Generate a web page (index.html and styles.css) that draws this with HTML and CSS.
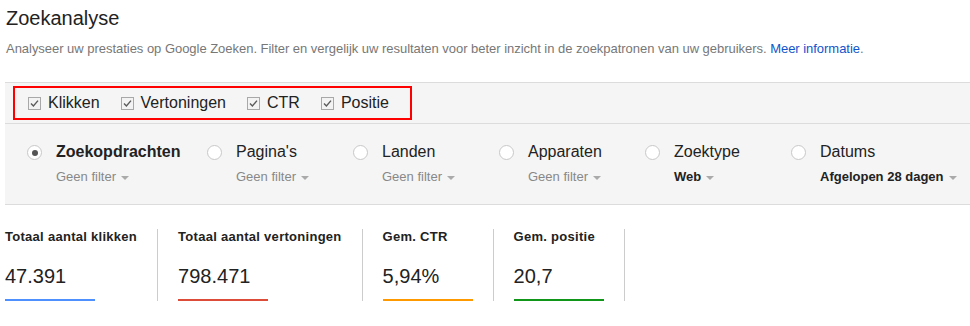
FILE: index.html
```html
<!DOCTYPE html>
<html lang="nl">
<head>
<meta charset="utf-8">
<title>Zoekanalyse</title>
<link rel="stylesheet" href="styles.css">
</head>
<body>
<div class="page">
  <h1 class="title">Zoekanalyse</h1>
  <p class="desc">Analyseer uw prestaties op Google Zoeken. Filter en vergelijk uw resultaten voor beter inzicht in de zoekpatronen van uw gebruikers. <a href="#" class="link">Meer informatie</a>.</p>

  <div class="panel">
    <div class="metrics-row">
      <div class="metrics-box">
        <label class="check"><svg class="cb" width="13" height="13" viewBox="0 0 13 13"><rect x="0.5" y="0.5" width="12" height="12" fill="#f3f3f3" stroke="#a8a8a8"/><path d="M3 6.6 L5.4 9 L10 3.6" fill="none" stroke="#5a5a5a" stroke-width="1.4"/></svg><span>Klikken</span></label>
        <label class="check"><svg class="cb" width="13" height="13" viewBox="0 0 13 13"><rect x="0.5" y="0.5" width="12" height="12" fill="#f3f3f3" stroke="#a8a8a8"/><path d="M3 6.6 L5.4 9 L10 3.6" fill="none" stroke="#5a5a5a" stroke-width="1.4"/></svg><span>Vertoningen</span></label>
        <label class="check"><svg class="cb" width="13" height="13" viewBox="0 0 13 13"><rect x="0.5" y="0.5" width="12" height="12" fill="#f3f3f3" stroke="#a8a8a8"/><path d="M3 6.6 L5.4 9 L10 3.6" fill="none" stroke="#5a5a5a" stroke-width="1.4"/></svg><span>CTR</span></label>
        <label class="check"><svg class="cb" width="13" height="13" viewBox="0 0 13 13"><rect x="0.5" y="0.5" width="12" height="12" fill="#f3f3f3" stroke="#a8a8a8"/><path d="M3 6.6 L5.4 9 L10 3.6" fill="none" stroke="#5a5a5a" stroke-width="1.4"/></svg><span>Positie</span></label>
      </div>
    </div>

    <div class="dims">
      <div class="dim dim-wide">
        <span class="radio radio-on"></span>
        <div class="dim-text">
          <div class="dim-name bold">Zoekopdrachten</div>
          <div class="dim-filter">Geen filter<span class="caret"></span></div>
        </div>
      </div>
      <div class="dim">
        <span class="radio"></span>
        <div class="dim-text">
          <div class="dim-name">Pagina's</div>
          <div class="dim-filter">Geen filter<span class="caret"></span></div>
        </div>
      </div>
      <div class="dim">
        <span class="radio"></span>
        <div class="dim-text">
          <div class="dim-name">Landen</div>
          <div class="dim-filter">Geen filter<span class="caret"></span></div>
        </div>
      </div>
      <div class="dim">
        <span class="radio"></span>
        <div class="dim-text">
          <div class="dim-name">Apparaten</div>
          <div class="dim-filter">Geen filter<span class="caret"></span></div>
        </div>
      </div>
      <div class="dim">
        <span class="radio"></span>
        <div class="dim-text">
          <div class="dim-name">Zoektype</div>
          <div class="dim-filter strong">Web<span class="caret"></span></div>
        </div>
      </div>
      <div class="dim">
        <span class="radio"></span>
        <div class="dim-text">
          <div class="dim-name">Datums</div>
          <div class="dim-filter strong">Afgelopen 28 dagen<span class="caret"></span></div>
        </div>
      </div>
    </div>
  </div>

  <div class="cards">
    <div class="card card-first">
      <div class="card-label">Totaal aantal klikken</div>
      <div class="card-value">47.391</div>
      <div class="bar bar-blue"></div>
    </div>
    <div class="card">
      <div class="card-label">Totaal aantal vertoningen</div>
      <div class="card-value">798.471</div>
      <div class="bar bar-red"></div>
    </div>
    <div class="card">
      <div class="card-label">Gem. CTR</div>
      <div class="card-value">5,94%</div>
      <div class="bar bar-orange"></div>
    </div>
    <div class="card">
      <div class="card-label">Gem. positie</div>
      <div class="card-value">20,7</div>
      <div class="bar bar-green"></div>
    </div>
  </div>
</div>
</body>
</html>
```

FILE: styles.css
```css
html, body {
  margin: 0;
  padding: 0;
  background: #fff;
}

body {
  font-family: "Liberation Sans", Arial, sans-serif;
  color: #222;
}

.page {
  padding-left: 5px;
}

.title {
  margin: 6px 0 0 1px;
  font-size: 20px;
  line-height: 24px;
  font-weight: normal;
  color: #222;
}

.desc {
  margin: 11px 0 0 1px;
  font-size: 13px;
  line-height: 16px;
  letter-spacing: -0.03px;
  color: #777;
}

.link {
  color: #15c;
  text-decoration: none;
}

.panel {
  margin-top: 25px;
  background: #f5f5f5;
  border-top: 1px solid #dcdcdc;
  border-bottom: 1px solid #dcdcdc;
}

.metrics-row {
  padding: 3px 0 3px 8px;
  border-bottom: 1px solid #dcdcdc;
}

.metrics-box {
  display: inline-flex;
  align-items: center;
  height: 30px;
  border: 2px solid #f00;
  padding-left: 13px;
}

.check {
  display: inline-flex;
  align-items: center;
  margin-right: 21px;
  font-size: 16px;
  line-height: 20px;
  color: #222;
}

.cb {
  display: block;
  margin-right: 7px;
}

.dims {
  display: flex;
  padding: 18px 0 19px 22px;
}

.dim {
  display: flex;
  align-items: flex-start;
  width: 146px;
  flex: none;
}

.dim-wide {
  width: 180px;
}

.radio {
  flex: none;
  box-sizing: border-box;
  width: 15px;
  height: 15px;
  margin-top: 3px;
  margin-right: 14px;
  border: 1px solid #c8c8c8;
  border-radius: 50%;
  background: #fff;
  display: flex;
  align-items: center;
  justify-content: center;
}

.radio-on::after {
  content: "";
  width: 6px;
  height: 6px;
  border-radius: 50%;
  background: #555;
}

.dim-name {
  font-size: 16px;
  line-height: 20px;
  color: #222;
  white-space: nowrap;
}

.bold {
  font-weight: bold;
}

.dim-filter {
  margin-top: 7px;
  font-size: 13px;
  line-height: 16px;
  color: #888;
  white-space: nowrap;
}

.dim-filter.strong {
  font-weight: bold;
  color: #222;
}

.caret {
  display: inline-block;
  width: 0;
  height: 0;
  margin-left: 5px;
  vertical-align: middle;
  border-left: 4px solid transparent;
  border-right: 4px solid transparent;
  border-top: 4px solid #aaa;
}

.cards {
  display: flex;
  margin-top: 24px;
}

.card {
  padding: 0 20px;
  border-right: 1px solid #ccc;
  min-width: 90px;
}

.card-first {
  padding-left: 0;
}

.card-label {
  font-size: 13px;
  line-height: 16px;
  font-weight: bold;
  letter-spacing: 0.28px;
  color: #222;
  white-space: nowrap;
}

.card-value {
  margin-top: 19px;
  font-size: 20px;
  line-height: 24px;
  color: #222;
}

.bar {
  width: 90px;
  height: 2px;
  margin-top: 11px;
}

.bar-blue { background: #4d90fe; }
.bar-red { background: #dd4b39; }
.bar-orange { background: #ff9900; }
.bar-green { background: #109618; }
```
